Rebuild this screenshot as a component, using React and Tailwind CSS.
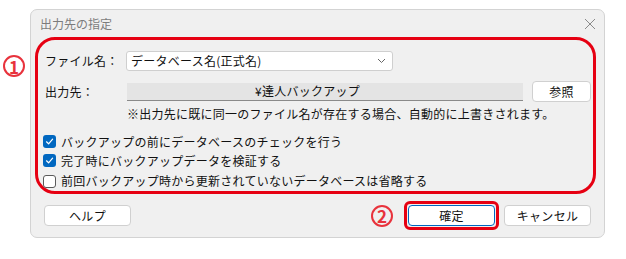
import React from "react";

const font = { fontFamily: '"Noto Sans CJK JP", "Noto Sans", sans-serif' };

function Check({ checked }) {
  return checked ? (
    <div className="w-[13px] h-[13px] rounded-[3px] bg-[#0067c0] flex items-center justify-center shrink-0">
      <svg width="9" height="9" viewBox="0 0 9 9">
        <path d="M1.5 4.8 L3.6 6.8 L7.6 2.2" fill="none" stroke="white" strokeWidth="1.2" strokeLinecap="round" strokeLinejoin="round" />
      </svg>
    </div>
  ) : (
    <div className="w-[13px] h-[13px] rounded-[3px] bg-white border border-[#5a5a5a] shrink-0" />
  );
}

function Badge({ n }) {
  return (
    <div className="w-[22px] h-[22px] rounded-full border-2 border-[#e8323c] flex items-center justify-center text-[#e8323c] text-[17px] font-bold leading-none shrink-0">
      {n}
    </div>
  );
}

function Btn({ children, focused }) {
  return (
    <div
      className={
        "w-[87px] h-[21px] rounded-[4px] bg-white flex items-center justify-center text-[12px] tracking-[0.3px] text-[#111] " +
        (focused ? "border border-[#0067c0]" : "border border-[#d0d0d0]")
      }
    >
      {children}
    </div>
  );
}

export default function App() {
  return (
    <div className="relative w-[626px] h-[259px] bg-white overflow-hidden" style={font}>
      <div className="absolute left-[3px] top-[55px]">
        <Badge n="1" />
      </div>
      <div className="ml-[30px] pt-[9px]">
        <div className="w-[575px] h-[229px] border border-[#d3d3d3] rounded-[7px] bg-[#f0f0f0] flex flex-col">
          <div className="h-[27px] flex items-center justify-between pl-[9px] pr-[8px]">
            <span className="text-[12px] text-[#7c7c7c]">出力先の指定</span>
            <svg width="12" height="12" viewBox="0 0 12 12">
              <path d="M1 1 L11 11 M11 1 L1 11" stroke="#8a8a8a" strokeWidth="1" fill="none" />
            </svg>
          </div>
          <div className="ml-[4px] w-[561px] h-[157px] border-[3px] border-[#e60012] rounded-[20px] flex flex-col pl-[4px] text-[12px] tracking-[0.25px] text-[#111]">
            <div className="mt-[11px] h-[20px] flex items-center">
              <div className="w-[84px] pl-[3px]">ファイル名：</div>
              <div className="w-[267px] h-[20px] bg-white border border-[#cfcfcf] rounded-[3px] flex items-center justify-between pl-[4px] pr-[6px]">
                <span>データベース名(正式名)</span>
                <svg width="9" height="6" viewBox="0 0 9 6">
                  <path d="M1 1 L4.5 4.5 L8 1" stroke="#666" strokeWidth="1" fill="none" />
                </svg>
              </div>
            </div>
            <div className="mt-[10px] h-[21px] flex items-center">
              <div className="w-[85px] pl-[3px]">出力先：</div>
              <div className="w-[396px] h-[18px] bg-[#e4e4e4] border-b border-[#8a8a8a] flex items-center pl-[128px]">
                <span>¥達人バックアップ</span>
              </div>
              <div className="ml-[9px] w-[59px] h-[21px] rounded-[4px] bg-white border border-[#d0d0d0] flex items-center justify-center">
                参照
              </div>
            </div>
            <div className="mt-[4px] pl-[85px] h-[15px] leading-[15px]">
              ※出力先に既に同一のファイル名が存在する場合、自動的に上書きされます。
            </div>
            <div className="mt-[11px] h-[20px] flex items-center pl-[1px] gap-[5px]">
              <Check checked />
              <span>バックアップの前にデータベースのチェックを行う</span>
            </div>
            <div className="h-[20px] flex items-center pl-[1px] gap-[5px]">
              <Check checked />
              <span>完了時にバックアップデータを検証する</span>
            </div>
            <div className="mt-[1px] h-[20px] flex items-center pl-[1px] gap-[5px]">
              <Check checked={false} />
              <span>前回バックアップ時から更新されていないデータベースは省略する</span>
            </div>
          </div>
          <div className="mt-[7px] flex items-center justify-between pl-[13px] pr-[13px]">
            <Btn>ヘルプ</Btn>
            <div className="flex items-center">
              <Badge n="2" />
              <div className="ml-[11px] border-[3px] border-[#e60012] rounded-[6px] p-[1px]">
                <Btn focused>確定</Btn>
              </div>
              <div className="ml-[5px]">
                <Btn>キャンセル</Btn>
              </div>
            </div>
          </div>
        </div>
      </div>
    </div>
  );
}
